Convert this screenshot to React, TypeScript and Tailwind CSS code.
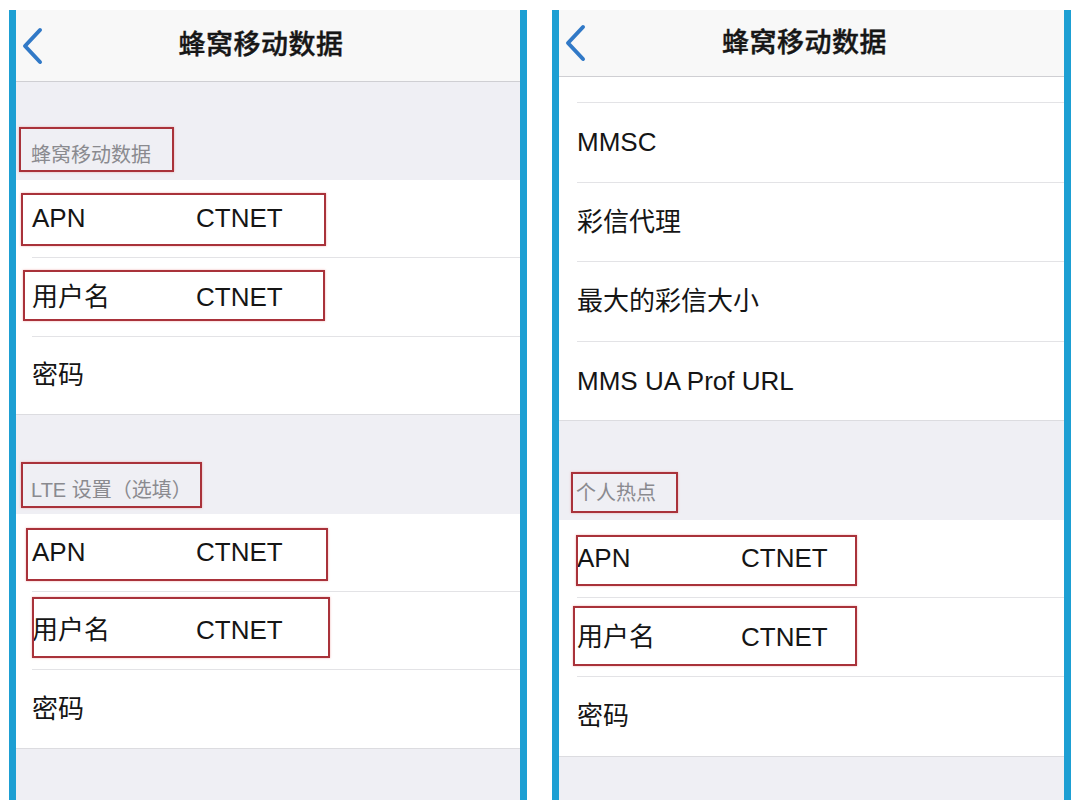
const FONT = 'font-["Liberation_Sans","Noto_Sans_CJK_SC",sans-serif]'

type Item =
  | { kind: 'header'; text: string; size: string; mark?: string }
  | { kind: 'row'; label: string; value?: string; size: string; mark?: string; last?: boolean }
  | { kind: 'gap'; size: string }
  | { kind: 'stub' }

// mark = position of the red annotation box over that row
const LEFT: Item[] = [
  { kind: 'header', text: '蜂窝移动数据', size: 'h-[98px] pb-[11px]', mark: 'top-[45px] left-[3px] w-[155px] h-[45px]' },
  { kind: 'row', label: 'APN', value: 'CTNET', size: 'h-[78px]', mark: 'top-[13px] left-[5px] w-[305px] h-[53px]' },
  { kind: 'row', label: '用户名', value: 'CTNET', size: 'h-[79px]', mark: 'top-[12px] left-[7px] w-[302px] h-[51px]' },
  { kind: 'row', label: '密码', size: 'h-[77px]', last: true },
  { kind: 'header', text: 'LTE 设置（选填）', size: 'h-[99px] pb-[10px]', mark: 'top-[47px] left-[5px] w-[181px] h-[46px]' },
  { kind: 'row', label: 'APN', value: 'CTNET', size: 'h-[78px]', mark: 'top-[14px] left-[10px] w-[302px] h-[53px]' },
  { kind: 'row', label: '用户名', value: 'CTNET', size: 'h-[78px]', mark: 'top-[5px] left-[16px] w-[298px] h-[61px]' },
  { kind: 'row', label: '密码', size: 'h-[78px]', last: true },
  { kind: 'gap', size: 'h-[51px]' },
]

const RIGHT: Item[] = [
  { kind: 'stub' },
  { kind: 'row', label: 'MMSC', size: 'h-[80px]' },
  { kind: 'row', label: '彩信代理', size: 'h-[79px]' },
  { kind: 'row', label: '最大的彩信大小', size: 'h-[80px]' },
  { kind: 'row', label: 'MMS UA Prof URL', size: 'h-[78px]', last: true },
  { kind: 'header', text: '个人热点', size: 'h-[99px] pb-[13px]', mark: 'top-[51px] left-[12px] w-[107px] h-[41px]' },
  { kind: 'row', label: 'APN', value: 'CTNET', size: 'h-[78px]', mark: 'top-[15px] left-[17px] w-[281px] h-[51px]' },
  { kind: 'row', label: '用户名', value: 'CTNET', size: 'h-[79px]', mark: 'top-[8px] left-[14px] w-[284px] h-[60px]' },
  { kind: 'row', label: '密码', size: 'h-[79px]', last: true },
  { kind: 'gap', size: 'h-[43px]' },
]

function RedBox({ pos }: { pos: string }) {
  return (
    <div className={`absolute ${pos} border-[2.5px] border-[#a9323a] shadow-[0_0_2px_rgba(230,120,120,0.6)] pointer-events-none`} />
  )
}

function Chevron() {
  return (
    <svg width="22" height="38" viewBox="0 0 22 38" fill="none">
      <path d="M19 3 L4 19 L19 35" stroke="#3179c7" strokeWidth="4" strokeLinecap="round" strokeLinejoin="round" />
    </svg>
  )
}

function Panel({ items, nav, inset }: { items: Item[]; nav: string; inset: string }) {
  return (
    <div className="flex flex-col h-[790px] border-x-[7px] border-[#1d9fd3] bg-[#efeff4] overflow-hidden">
      <div className={`relative shrink-0 flex items-center justify-center bg-[#f8f8f8] border-b border-[#cfcfd3] pr-[14px] ${nav}`}>
        <div className="absolute left-[5px] top-1/2 -translate-y-1/2">
          <Chevron />
        </div>
        <span className="text-[27px] font-medium text-[#161616] tracking-[0.5px] [-webkit-text-stroke:0.4px_#161616]">
          蜂窝移动数据
        </span>
      </div>
      {items.map((it, i) => {
        if (it.kind === 'gap') return <div key={i} className={`shrink-0 ${it.size}`} />
        if (it.kind === 'stub')
          return (
            <div key={i} className={`shrink-0 bg-white ${inset}`}>
              <div className="h-[26px] border-b border-[#e3e3e6]" />
            </div>
          )
        if (it.kind === 'header')
          return (
            <div
              key={i}
              className={`relative shrink-0 flex items-end text-[20px] leading-[28px] text-[#8a8a8f] ${inset} ${it.size}`}
            >
              <span className="-ml-px">{it.text}</span>
              {it.mark && <RedBox pos={it.mark} />}
            </div>
          )
        return (
          <div key={i} className={`relative shrink-0 bg-white ${inset} ${it.last ? 'border-b border-[#dcdce0]' : ''}`}>
            <div
              className={`flex items-center text-[26px] text-[#151515] ${it.size} ${it.last ? '' : 'border-b border-[#e3e3e6]'}`}
            >
              <span className="w-[164px] shrink-0 whitespace-nowrap">{it.label}</span>
              {it.value && <span>{it.value}</span>}
            </div>
            {it.mark && <RedBox pos={it.mark} />}
          </div>
        )
      })}
    </div>
  )
}

export default function App() {
  return (
    <div className={`w-[1080px] h-[810px] bg-white pt-[10px] flex ${FONT}`}>
      <div className="ml-[9px] w-[518px]">
        <Panel items={LEFT} nav="h-[72px]" inset="pl-[16px]" />
      </div>
      <div className="ml-[25px] w-[519px]">
        <Panel items={RIGHT} nav="h-[67px]" inset="pl-[18px]" />
      </div>
    </div>
  )
}
